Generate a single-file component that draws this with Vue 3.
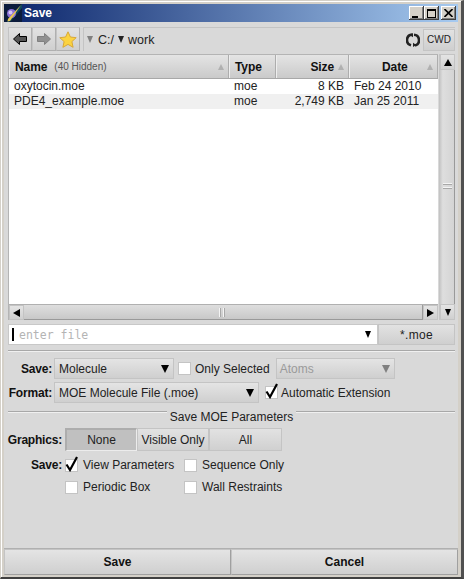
<script setup>
const columns = [
  { key: 'name', label: 'Name', cls: 'c-name', sort: true },
  { key: 'type', label: 'Type', cls: 'c-type', sort: false },
  { key: 'size', label: 'Size', cls: 'c-size', sort: true },
  { key: 'date', label: 'Date', cls: 'c-date', sort: true }
]
const files = [
  { name: 'oxytocin.moe', type: 'moe', size: '8 KB', date: 'Feb 24 2010' },
  { name: 'PDE4_example.moe', type: 'moe', size: '2,749 KB', date: 'Jan 25 2011' }
]
</script>

<template>
  <div class="window">
    <div class="titlebar">
      <svg class="app-icon" width="18" height="18" viewBox="0 0 18 18">
        <rect width="18" height="18" fill="#0c1c3c" />
        <path d="M18 0 L18 4 L7 17 L3 18 L5 13 Z" fill="#0f4a5c" />
        <circle cx="7.5" cy="9.5" r="4.5" fill="#8a6fd6" />
        <circle cx="6.5" cy="8.5" r="2" fill="#d5c8f5" />
        <path d="M17 1 L6 17 L3.5 17.5 L4 15 Z" fill="#e8c850" />
      </svg>
      <span class="title">Save</span>
      <div class="win-btns">
        <button class="win-btn"><span class="min-glyph"></span></button>
        <button class="win-btn"><span class="max-glyph"></span></button>
        <button class="win-btn win-close">
          <svg width="9" height="8" viewBox="0 0 9 8"><path d="M0.5 0 L8.5 8 M8.5 0 L0.5 8" stroke="#000" stroke-width="1.6" /></svg>
        </button>
      </div>
    </div>

    <div class="body">
      <div class="toolbar">
        <button class="tool-btn">
          <svg width="14" height="12" viewBox="0 0 14 12"><path d="M0.5 6 L6.5 0.5 V3.5 H13.5 V8.5 H6.5 V11.5 Z" fill="#555" stroke="#000" /></svg>
        </button>
        <button class="tool-btn">
          <svg width="14" height="12" viewBox="0 0 14 12"><path d="M13.5 6 L7.5 0.5 V3.5 H0.5 V8.5 H7.5 V11.5 Z" fill="#909090" stroke="#808080" /></svg>
        </button>
        <button class="tool-btn">
          <svg width="18" height="17" viewBox="0 0 18 17"><path d="M9 0.8 L11.4 6 L17.2 6.7 L12.9 10.6 L14.1 16.3 L9 13.4 L3.9 16.3 L5.1 10.6 L0.8 6.7 L6.6 6 Z" fill="#fbd341" stroke="#d8a838" /></svg>
        </button>
        <div class="pathbar">
          <span class="arrow-down grey"></span>
          <span class="crumb">C:/</span>
          <span class="arrow-down"></span>
          <span class="crumb crumb-work">work</span>
          <svg class="refresh" width="14" height="14" viewBox="0 0 14 14">
            <path d="M6 1.6 A5.4 5.4 0 0 0 5 12.2" fill="none" stroke="#222" stroke-width="2.6" />
            <path d="M8 1.8 A5.4 5.4 0 0 1 9 12.4" fill="none" stroke="#222" stroke-width="2.6" />
            <path d="M7 0 L3.6 2 L7 4.2 Z M7 14 L10.4 12 L7 9.8 Z" fill="#222" />
          </svg>
          <button class="cwd">CWD</button>
        </div>
      </div>

      <div class="browser">
        <div class="list-wrap">
          <div class="table-head">
            <div v-for="col in columns" :key="col.key" class="th" :class="col.cls">
              <span class="th-label">{{ col.label }}</span>
              <span v-if="col.key === 'name'" class="hidden-count">(40 Hidden)</span>
              <span v-if="col.sort" class="sort"></span>
            </div>
          </div>
          <div class="rows">
            <div v-for="file in files" :key="file.name" class="row">
              <span class="c-name cell">{{ file.name }}</span>
              <span class="c-type cell">{{ file.type }}</span>
              <span class="c-size cell size-cell">{{ file.size }}</span>
              <span class="c-date cell date-cell">{{ file.date }}</span>
            </div>
          </div>
          <div class="hscroll">
            <button class="sb-btn"><span class="arrow-left"></span></button>
            <div class="h-thumb"><span class="grip-v"></span></div>
            <button class="sb-btn"><span class="arrow-right"></span></button>
          </div>
        </div>
        <div class="vscroll">
          <button class="sb-btn v"><span class="arrow-up"></span></button>
          <div class="v-thumb"><span class="grip-h"></span></div>
          <button class="sb-btn v"><span class="arrow-down dark"></span></button>
        </div>
      </div>

      <div class="file-row">
        <div class="file-input">
          <span class="caret"></span>
          <span class="placeholder">enter file</span>
          <span class="arrow-down dark file-arrow"></span>
        </div>
        <button class="filter-btn">*.moe</button>
      </div>

      <div class="sep"></div>

      <div class="form-row row-save">
        <label class="lbl lbl-a">Save:</label>
        <div class="select sel-mol"><span>Molecule</span><i class="arrow-down dark"></i></div>
        <span class="check"></span>
        <span class="chk-label">Only Selected</span>
        <div class="select sel-atoms"><span>Atoms</span><i class="arrow-down grey"></i></div>
      </div>
      <div class="form-row row-format">
        <label class="lbl lbl-a">Format:</label>
        <div class="select sel-format"><span>MOE Molecule File (.moe)</span><i class="arrow-down dark"></i></div>
        <span class="check check-auto">
          <svg class="tick" width="14" height="16" viewBox="0 0 14 16"><path d="M1.5 8.5 L5 14 L12 1" fill="none" stroke="#000" stroke-width="2.2" /></svg>
        </span>
        <span class="chk-label chk-auto">Automatic Extension</span>
      </div>

      <div class="legend">
        <span class="legend-line"></span>
        <span class="legend-text">Save MOE Parameters</span>
        <span class="legend-line"></span>
      </div>

      <div class="graphics-row">
        <label class="lbl lbl-b">Graphics:</label>
        <div class="segments">
          <button class="seg seg-on">None</button>
          <button class="seg">Visible Only</button>
          <button class="seg seg-last">All</button>
        </div>
      </div>

      <div class="opts">
        <label class="lbl lbl-b">Save:</label>
        <div class="opt-grid">
          <div class="opt">
            <span class="check">
              <svg class="tick" width="14" height="16" viewBox="0 0 14 16"><path d="M1.5 8.5 L5 14 L12 1" fill="none" stroke="#000" stroke-width="2.2" /></svg>
            </span>
            <span>View Parameters</span>
          </div>
          <div class="opt"><span class="check"></span><span>Sequence Only</span></div>
          <div class="opt"><span class="check"></span><span>Periodic Box</span></div>
          <div class="opt"><span class="check"></span><span>Wall Restraints</span></div>
        </div>
      </div>

      <div class="spacer"></div>

      <div class="actions">
        <button class="action">Save</button>
        <button class="action">Cancel</button>
      </div>
    </div>
  </div>
</template>

<style>
html, body { margin: 0; padding: 0; background: #d4d0c8; }
</style>

<style scoped>
* { box-sizing: border-box; }
.window {
  width: 464px;
  height: 579px;
  display: flex;
  flex-direction: column;
  padding: 3px 3px 2px 3px;
  background: #d4d0c8;
  border-style: solid;
  border-width: 1px 3px 2px 1px;
  border-color: #d4d0c8 #505050 #404040 #d4d0c8;
  box-shadow: inset 1px 1px 0 #fff;
  font-family: "Liberation Sans", Arial, sans-serif;
  font-size: 12px;
  color: #000;
  overflow: hidden;
}
.titlebar {
  height: 18px;
  flex: none;
  display: flex;
  align-items: center;
  background: linear-gradient(90deg, #0a246a, #a6caf0);
}
.app-icon { flex: none; }
.title {
  margin-left: 2px;
  color: #fff;
  font: bold 12px/18px "Liberation Sans", sans-serif;
}
.win-btns { margin-left: auto; margin-right: 2px; display: flex; }
.win-btn {
  width: 15px;
  height: 14px;
  padding: 0;
  margin: 0;
  background: #d4d0c8;
  border: none;
  box-shadow: inset -1px -1px 0 #404040, inset 1px 1px 0 #fff, inset -2px -2px 0 #808080;
  display: flex;
  align-items: center;
  justify-content: center;
  position: relative;
}
.win-close { margin-left: 2px; }
.min-glyph { width: 6px; height: 2px; background: #000; margin: 7px 3px 0 0; }
.max-glyph { width: 9px; height: 9px; border: 1px solid #000; border-top-width: 2px; margin-right: 1px; }
.body {
  flex: 1;
  min-height: 0;
  display: flex;
  flex-direction: column;
  background: #d9d9d9;
}
.toolbar {
  display: flex;
  padding: 5px 0 0 4px;
  height: 32px;
  flex: none;
}
.tool-btn {
  width: 24px;
  height: 24px;
  padding: 0;
  margin-right: 0;
  border: 1px solid #c4c4c4;
  border-right-color: #b0b0b0;
  border-bottom-color: #b0b0b0;
  background: linear-gradient(#e2e2e2, #cfcfcf);
  display: flex;
  align-items: center;
  justify-content: center;
}
.pathbar {
  margin-left: 3px;
  width: 372px;
  height: 24px;
  display: flex;
  align-items: center;
  background: #d9d9d9;
  border: 1px solid #c4c4c4;
  border-right: none;
  border-bottom: none;
}
.arrow-down {
  display: inline-block;
  width: 0;
  height: 0;
  border-left: 3px solid transparent;
  border-right: 3px solid transparent;
  border-top: 7px solid #222;
}
.arrow-down.grey { border-top-color: #808080; }
.arrow-down.dark { border-top-color: #000; }
.pathbar > .arrow-down:first-child { margin-left: 3px; }
.crumb { margin-left: 5px; font-size: 12.5px; color: #222; }
.crumb + .arrow-down { margin-left: 4px; }
.crumb-work { margin-left: 4px; }
.refresh { margin-left: auto; margin-right: 3px; }
.cwd {
  width: 32px;
  height: 22px;
  padding: 0;
  border: 1px solid #c4c4c4;
  background: linear-gradient(#e2e2e2, #cfcfcf);
  font: 10px "Liberation Sans", sans-serif;
  color: #222;
}
.browser {
  height: 266px;
  flex: none;
  margin: 0 3px 0 4px;
  display: flex;
}
.list-wrap {
  width: 430px;
  display: flex;
  flex-direction: column;
  border: 1px solid #b4b4b4;
  border-right: none;
  border-bottom: none;
}
.table-head {
  display: flex;
  height: 24px;
  flex: none;
  background: linear-gradient(#e4e4e4, #cacaca);
  border-bottom: 1px solid #a8a8a8;
}
.th {
  display: flex;
  align-items: center;
  height: 100%;
  padding: 0 4px 0 5px;
  border-right: 1px solid #adadad;
  border-left: 1px solid #eee;
}
.th-label { font-weight: bold; color: #111; letter-spacing: -0.1px; }
.c-name { width: 220px; }
.c-type { width: 47px; }
.c-size { width: 73px; }
.c-date { width: 89px; }
.c-size.th { justify-content: flex-end; }
.c-date.th { justify-content: center; padding-left: 32px; }
.c-size .th-label { margin-right: 4px; }
.hidden-count { font-size: 10px; color: #555; margin-left: 7px; }
.sort {
  margin-left: auto;
  width: 0;
  height: 0;
  border-left: 3px solid transparent;
  border-right: 3px solid transparent;
  border-bottom: 6px solid #b0b0b0;
}
.c-size .sort { margin-left: 0; }
.rows { flex: 1; min-height: 0; background: #fff; }
.row { display: flex; height: 15px; line-height: 15px; color: #222; white-space: nowrap; }
.row:nth-child(2) { background: #f0f0f0; }
.cell { padding: 0 0 0 5px; }
.size-cell { text-align: right; padding: 0 5px 0 0; }
.date-cell { padding-left: 5px; }
.hscroll {
  height: 16px;
  flex: none;
  display: flex;
  background: #d9d9d9;
  border-top: 1px solid #b0b0b0;
}
.sb-btn {
  width: 15px;
  height: 15px;
  padding: 0;
  flex: none;
  border: 1px solid #c4c4c4;
  background: linear-gradient(#e4e4e4, #d0d0d0);
  display: flex;
  align-items: center;
  justify-content: center;
}
.sb-btn.v { width: 15px; height: 16px; }
.h-thumb {
  flex: 1;
  display: flex;
  align-items: center;
  justify-content: center;
  background: linear-gradient(#dedede, #c8c8c8);
  border-bottom: 1px solid #999;
  border-right: 1px solid #999;
}
.grip-v {
  width: 8px;
  height: 9px;
  background: repeating-linear-gradient(90deg, #f4f4f4 0 1px, #a8a8a8 1px 2px, transparent 2px 4px);
}
.arrow-left {
  width: 0; height: 0;
  border-top: 4px solid transparent;
  border-bottom: 4px solid transparent;
  border-right: 7px solid #000;
}
.arrow-right {
  width: 0; height: 0;
  border-top: 4px solid transparent;
  border-bottom: 4px solid transparent;
  border-left: 7px solid #000;
}
.arrow-up {
  width: 0; height: 0;
  border-left: 4px solid transparent;
  border-right: 4px solid transparent;
  border-bottom: 7px solid #000;
}
.vscroll {
  width: 16px;
  margin-left: 1px;
  flex: none;
  display: flex;
  flex-direction: column;
  background: #d9d9d9;
  border-left: 1px solid #c4c4c4;
}
.v-thumb {
  flex: 1;
  display: flex;
  align-items: center;
  justify-content: center;
  background: linear-gradient(90deg, #c8c8c8, #dedede 20%, #d4d4d4);
  border-right: 1px solid #999;
}
.grip-h {
  width: 9px;
  height: 8px;
  background: repeating-linear-gradient(180deg, #f4f4f4 0 1px, #a8a8a8 1px 2px, transparent 2px 4px);
}
.file-row {
  margin: 4px 3px 0 4px;
  display: flex;
  height: 21px;
  flex: none;
}
.file-input {
  width: 370px;
  height: 21px;
  background: #fff;
  display: flex;
  align-items: center;
  border: 1px solid #c8c8c8;
  padding-left: 3px;
}
.caret { width: 2px; height: 13px; background: #000; }
.placeholder {
  margin-left: 5px;
  font: 11.5px "DejaVu Sans Mono", monospace;
  color: #b4b4b4;
}
.file-arrow { margin-left: auto; margin-right: 6px; }
.filter-btn {
  flex: 1;
  padding: 0;
  height: 21px;
  border: 1px solid #c4c4c4;
  background: linear-gradient(#e2e2e2, #cfcfcf);
  font: 12px "Liberation Sans", sans-serif;
  color: #222;
  letter-spacing: 0.3px;
}
.sep {
  margin: 5px 3px 0 4px;
  height: 2px;
  flex: none;
  background: linear-gradient(#a8a8a8 50%, #f0f0f0 50%);
}
.form-row {
  display: flex;
  align-items: center;
  height: 21px;
  flex: none;
}
.row-save { margin-top: 6px; }
.row-format { margin-top: 3px; }
.lbl { font-weight: bold; text-align: right; color: #111; flex: none; letter-spacing: -0.2px; }
.lbl-a { width: 47px; padding-left: 1px; }
.lbl-b { width: 58px; }
.select {
  height: 21px;
  margin-left: 3px;
  padding: 0 4px 0 3px;
  display: flex;
  align-items: center;
  justify-content: space-between;
  border: 1px solid #c4c4c4;
  background: linear-gradient(#e4e4e4, #cfcfcf);
  color: #222;
  flex: none;
}
.row-save .lbl, .row-format .lbl { transform: translateX(1px); }
.sel-mol span, .sel-format span { margin-left: 1px; }
.select .arrow-down { border-left-width: 4px; border-right-width: 4px; border-top-width: 8px; }
.sel-mol { width: 120px; }
.sel-format { width: 205px; }
.sel-atoms { width: 119px; margin-left: 6px; color: #9a9a9a; }
.check {
  width: 13px;
  height: 13px;
  margin-left: 4px;
  flex: none;
  background: #fff;
  border: 1px solid #c4c4c4;
  position: relative;
  display: inline-block;
}
.check-auto { margin-left: 6px; }
.tick { position: absolute; left: -1px; top: -4px; }
.chk-label { margin-left: 4px; color: #222; white-space: nowrap; }
.chk-auto { margin-left: 3px; }
.legend {
  margin: 7px 3px 0 4px;
  display: flex;
  height: 14px;
  flex: none;
}
.legend-line {
  flex: 1;
  height: 2px;
  margin-top: 1px;
  background: linear-gradient(#a8a8a8 50%, #f0f0f0 50%);
}
.legend-text { padding: 2px 3px 0; color: #222; line-height: 11px; }
.graphics-row {
  display: flex;
  align-items: center;
  height: 23px;
  margin-top: 4px;
  flex: none;
}
.segments { display: flex; margin-left: 3px; }
.seg {
  width: 72px;
  height: 23px;
  padding: 0;
  border: 1px solid #c4c4c4;
  background: linear-gradient(#e2e2e2, #d0d0d0);
  font: 12px "Liberation Sans", sans-serif;
  color: #222;
}
.seg-last { width: 73px; }
.seg-on {
  background: #c0c0c0;
  border-color: #adadad #ececec #ececec #adadad;
  border-width: 2px 1px 1px 2px;
}
.opts { display: flex; margin-top: 4px; flex: none; }
.opts .lbl-b { line-height: 20px; }
.opt-grid {
  margin-left: 3px;
  display: grid;
  grid-template-columns: 119px 120px;
  grid-auto-rows: 22px;
}
.opt { display: flex; align-items: center; gap: 5px; height: 20px; color: #222; white-space: nowrap; }
.opt .check { margin-left: 0; }
.spacer { flex: 1; }
.actions {
  display: flex;
  height: 27px;
  flex: none;
  border-top: 1px solid #b0b0b0;
}
.action {
  flex: 1;
  height: 26px;
  padding: 0;
  border: 1px solid #c4c4c4;
  border-right-color: #a0a0a0;
  border-bottom-color: #a0a0a0;
  background: linear-gradient(#e4e4e4, #cfcfcf);
  font: bold 12px "Liberation Sans", sans-serif;
  color: #111;
}
</style>
